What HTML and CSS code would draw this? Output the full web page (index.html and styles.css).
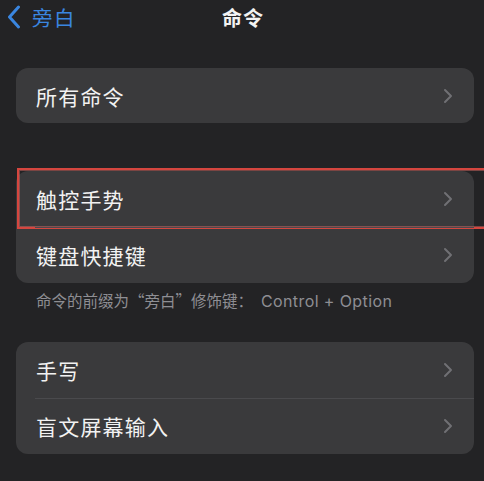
FILE: index.html
```html
<!DOCTYPE html>
<html>
<head>
  <title>命令</title>
  <link rel="stylesheet" href="styles.css">
</head>
<body>
  <div class="nav">
    <a class="back" href="#">
      <svg width="14" height="24" viewBox="0 0 14 24"><path d="M11.5 2 L2.5 12 L11.5 22" fill="none" stroke="#3a86e0" stroke-width="3" stroke-linecap="round" stroke-linejoin="round"/></svg>
      <span>旁白</span>
    </a>
    <div class="title">命令</div>
    <div></div>
  </div>

  <div class="group first">
    <div class="row"><span>所有命令</span><svg class="chev" width="10" height="16" viewBox="0 0 10 16"><path d="M2 2 L8 8 L2 14" fill="none" stroke="#707074" stroke-width="2" stroke-linecap="round" stroke-linejoin="round"/></svg></div>
  </div>

  <div class="group second">
    <div class="row marked"><span>触控手势</span><svg class="chev" width="10" height="16" viewBox="0 0 10 16"><path d="M2 2 L8 8 L2 14" fill="none" stroke="#707074" stroke-width="2" stroke-linecap="round" stroke-linejoin="round"/></svg>
      <div class="highlight"></div>
    </div>
    <div class="row"><span>键盘快捷键</span><svg class="chev" width="10" height="16" viewBox="0 0 10 16"><path d="M2 2 L8 8 L2 14" fill="none" stroke="#707074" stroke-width="2" stroke-linecap="round" stroke-linejoin="round"/></svg></div>
  </div>
  <div class="note">命令的前缀为“旁白”修饰键：<span class="latin">&nbsp;Control + Option</span></div>

  <div class="group third">
    <div class="row"><span>手写</span><svg class="chev" width="10" height="16" viewBox="0 0 10 16"><path d="M2 2 L8 8 L2 14" fill="none" stroke="#707074" stroke-width="2" stroke-linecap="round" stroke-linejoin="round"/></svg></div>
    <div class="row"><span>盲文屏幕输入</span><svg class="chev" width="10" height="16" viewBox="0 0 10 16"><path d="M2 2 L8 8 L2 14" fill="none" stroke="#707074" stroke-width="2" stroke-linecap="round" stroke-linejoin="round"/></svg></div>
  </div>
</body>
</html>
```

FILE: styles.css
```css
body {
  background: #232325;
  font-family: "Noto Sans CJK SC", "Noto Sans", sans-serif;
  color: #f2f2f2;
  margin: 0;
  padding: 0;
  overflow: hidden;
}

.nav {
  display: grid;
  grid-template-columns: 1fr auto 1fr;
  align-items: center;
  height: 34px;
}

.back {
  display: flex;
  align-items: center;
  gap: 11px;
  padding-left: 7px;
  color: #3a86e0;
  text-decoration: none;
  font-size: 20.5px;
  letter-spacing: 1.5px;
}

.title {
  font-size: 20px;
  font-weight: 700;
  letter-spacing: 1px;
  padding-left: 2px;
}

.group {
  background: #3a3a3c;
  border-radius: 12px;
  margin: 0 10px 0 16px;
}

.first {
  margin-top: 34px;
}

.first .row {
  height: 55px;
}

.second {
  margin-top: 48px;
}

.third {
  margin-top: 31px;
}

.row {
  position: relative;
  display: flex;
  align-items: center;
  justify-content: space-between;
  height: 56px;
  padding: 0 21px 0 20px;
  font-size: 21px;
  letter-spacing: 1.2px;
}

.row + .row::before {
  content: "";
  position: absolute;
  top: 0;
  left: 19px;
  right: 0;
  border-top: 1px solid #4a4a4d;
}

.highlight {
  position: absolute;
  left: 1px;
  top: -3px;
  right: -30px;
  bottom: -2px;
  border: 2.5px solid #d5463f;
  box-shadow: inset 0 0 0 1px rgba(230, 110, 105, 0.45);
}

.note {
  margin: 7px 0 0 36px;
  font-size: 15.5px;
  line-height: 20px;
  color: #8e8e93;
}

.latin {
  font-family: Inter, "Noto Sans", sans-serif;
  font-size: 16px;
  letter-spacing: 0.4px;
  padding-left: 3px;
}
```
